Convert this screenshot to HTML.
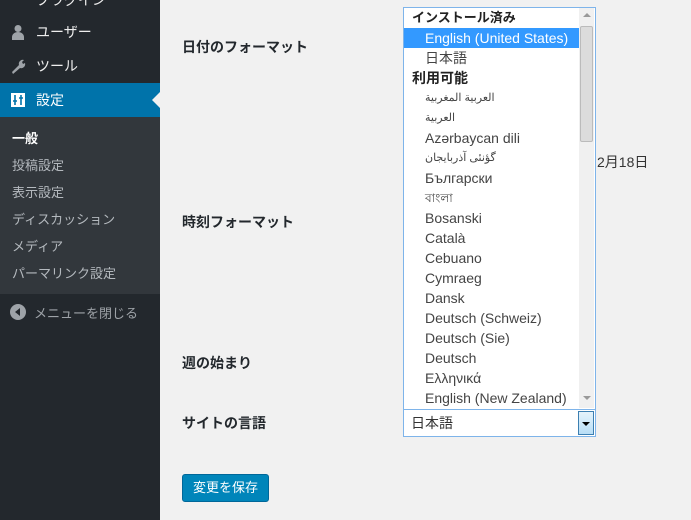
<!DOCTYPE html>
<html><head><meta charset="utf-8"><style>
body{margin:0;width:691px;height:520px;overflow:hidden;background:#f1f1f1;font-family:"Liberation Sans","Noto Sans CJK JP",sans-serif;position:relative}
.side{position:absolute;left:0;top:0;width:160px;height:520px;background:#23282d}
.it{position:absolute;left:0;width:160px;height:34px;color:#eee;font-size:14px;line-height:34px}
.it span{position:absolute;left:36px}
.ico{position:absolute;left:10px;top:9px;width:16px;height:16px}
.sub{position:absolute;left:0;top:117px;width:160px;height:177px;background:#32373c}
.sub div{position:absolute;left:12px;font-size:13px;color:#b4b9be}
.lab{position:absolute;left:182px;font-size:14px;font-weight:bold;color:#23282d}
.list{position:absolute;left:403px;top:7px;width:191px;height:401px;background:#fff;border:1px solid #7eb4ea;overflow:hidden}
.list div{height:20px;line-height:20px;font-size:14px;color:#444;padding-left:21px;white-space:nowrap}
.list div.g{padding-left:8px;font-weight:bold;color:#222}
.list div.sel{background:#3399ff;color:#fff;width:154px}
.sb{position:absolute;left:579px;top:8px;width:15px;height:400px;background:#f0f0f0}
</style></head><body>
<div class="side">
 <div class="it" style="top:-17px;color:#eee"><span>プラグイン</span></div>
 <div class="it" style="top:15px"><svg class="ico" viewBox="0 0 16 16"><circle cx="8" cy="4.5" r="3.5" fill="#9ea3a8"/><path d="M2 16v-3c0-3 3-5 6-5s6 2 6 5v3z" fill="#9ea3a8"/></svg><span>ユーザー</span></div>
 <div class="it" style="top:49px"><svg class="ico" viewBox="0 0 16 16"><path d="M2 14l7-7a4 4 0 0 1 5-5l-2 2 1 2 2-1a4 4 0 0 1-5 5l-7 6z" fill="#9ea3a8"/></svg><span>ツール</span></div>
 <div class="it" style="top:83px;background:#0073aa;color:#fff"><svg class="ico" viewBox="0 0 16 16"><rect x="1" y="1" width="14" height="14" fill="#fff"/><path d="M5 3v10M11 3v10M3 9h4M9 6h4" stroke="#0073aa" stroke-width="1.6"/></svg><span>設定</span>
  <div style="position:absolute;right:0;top:9px;border:8px solid transparent;border-right-color:#f1f1f1"></div></div>
 <div class="sub">
  <div style="top:11px;color:#fff;font-weight:bold">一般</div>
  <div style="top:38px">投稿設定</div>
  <div style="top:65px">表示設定</div>
  <div style="top:92px">ディスカッション</div>
  <div style="top:119px">メディア</div>
  <div style="top:146px">パーマリンク設定</div>
 </div>
 <svg style="position:absolute;left:10px;top:304px" width="16" height="16" viewBox="0 0 16 16"><circle cx="8" cy="8" r="8" fill="#9ea3a8"/><path d="M10 4v8L5 8z" fill="#23282d"/></svg>
 <div style="position:absolute;left:34px;top:303px;font-size:13px;color:#9ea3a8">メニューを閉じる</div>
</div>
<div class="lab" style="top:37px">日付のフォーマット</div>
<div class="lab" style="top:212px">時刻フォーマット</div>
<div class="lab" style="top:353px">週の始まり</div>
<div class="lab" style="top:413px">サイトの言語</div>
<div style="position:absolute;left:597px;top:152px;font-size:14px;color:#333">2月18日</div>
<div class="list">
<div class="g" style="font-size:13px">インストール済み</div>
<div class="sel">English (United States)</div>
<div>日本語</div>
<div class="g">利用可能</div>
<div style="font-size:11px">العربية المغربية</div>
<div style="font-size:11px">العربية</div>
<div>Azərbaycan dili</div>
<div style="font-size:11px">گؤنئی آذربایجان</div>
<div>Български</div>
<div style="font-size:12px">বাংলা</div>
<div>Bosanski</div>
<div>Català</div>
<div>Cebuano</div>
<div>Cymraeg</div>
<div>Dansk</div>
<div>Deutsch (Schweiz)</div>
<div>Deutsch (Sie)</div>
<div>Deutsch</div>
<div>Ελληνικά</div>
<div>English (New Zealand)</div>
</div>
<div class="sb">
 <div style="position:absolute;left:4px;top:5px;border:4px solid transparent;border-bottom-color:#999;border-top:0"></div>
 <div style="position:absolute;left:1px;top:18px;width:13px;height:116px;background:#dcdcdc;border:1px solid #bbb;box-sizing:border-box;border-radius:2px"></div>
 <div style="position:absolute;left:4px;top:388px;border:4px solid transparent;border-top-color:#999;border-bottom:0"></div>
</div>
<div style="position:absolute;left:403px;top:409px;width:193px;height:28px;background:#fff;border:1px solid #7eb4ea;box-sizing:border-box;font-size:14px;line-height:26px;padding-left:7px;color:#333">日本語
 <div style="position:absolute;right:1px;top:1px;width:16px;height:24px;background:linear-gradient(#e5f3fb,#b8def6);border:1px solid #3c7fb1;box-sizing:border-box"><div style="position:absolute;left:3px;top:10px;border:4px solid transparent;border-top-color:#000;border-bottom:0"></div></div>
</div>
<div style="position:absolute;left:182px;top:474px;width:87px;height:28px;background:#0085ba;border:1px solid #006799;box-sizing:border-box;border-radius:3px;color:#fff;font-size:13px;line-height:26px;text-align:center">変更を保存</div>
</body></html>
